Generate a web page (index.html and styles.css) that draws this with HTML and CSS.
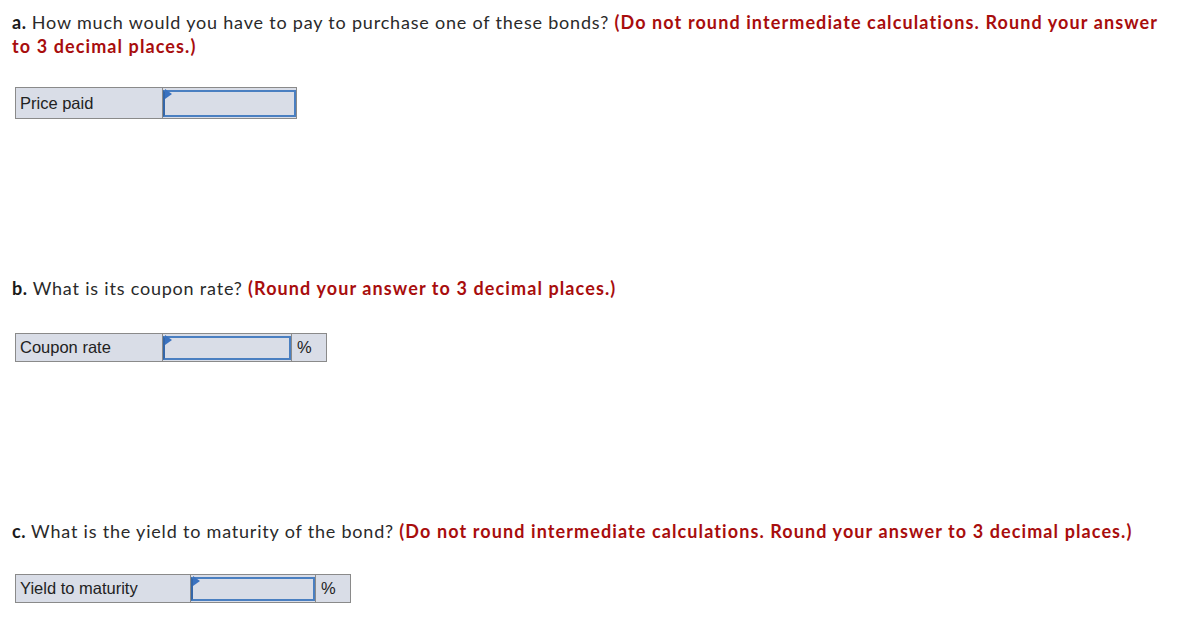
FILE: index.html
```html
<!DOCTYPE html>
<html>
<head>
<meta charset="utf-8">
<link rel="stylesheet" href="styles.css">
</head>
<body>
<div class="page">
  <section class="part part-a">
    <p class="q"><b class="lead">a.</b> How much would you have to pay to purchase one of these bonds? <strong class="note">(Do not round intermediate calculations. Round your answer to 3 decimal places.)</strong></p>
    <table class="ans tall">
      <tr>
        <td class="label w-a">Price paid</td>
        <td class="input-cell in-a"><div class="box"><span class="flag"></span></div></td>
      </tr>
    </table>
  </section>
  <section class="part part-b">
    <p class="q"><b class="lead">b.</b> What is its coupon rate? <strong class="note">(Round your answer to 3 decimal places.)</strong></p>
    <table class="ans">
      <tr>
        <td class="label w-b">Coupon rate</td>
        <td class="input-cell in-b"><div class="box"><span class="flag"></span></div></td>
        <td class="unit">%</td>
      </tr>
    </table>
  </section>
  <section class="part part-c">
    <p class="q"><b class="lead">c.</b> What is the yield to maturity of the bond? <strong class="note">(Do not round intermediate calculations. Round your answer to 3 decimal places.)</strong></p>
    <table class="ans">
      <tr>
        <td class="label w-c">Yield to maturity</td>
        <td class="input-cell in-c"><div class="box"><span class="flag"></span></div></td>
        <td class="unit">%</td>
      </tr>
    </table>
  </section>
</div>
</body>
</html>
```
FILE: styles.css
```css
html, body { margin: 0; padding: 0; background: #fff; }
.page { padding: 10px 12px 0 12px; font-family: Lato, "Open Sans", sans-serif; color: #2a2a2a; }
.q { margin: 0; font-size: 18px; line-height: 24px; letter-spacing: 0.8px; }
.lead { font-weight: 700; color: #1a1a1a; letter-spacing: 0.5px; }
.note { color: #a80d0d; font-weight: 700; letter-spacing: 1.1px; }
.part-a .ans { margin-top: 29px; }
.part-b { margin-top: 157px; }
.part-b .ans { margin-top: 33px; }
.part-c { margin-top: 157px; }
.part-c .ans { margin-top: 31px; }
.ans { border-collapse: collapse; margin-left: 3px; font-family: "Liberation Sans", Arial, sans-serif; font-size: 16.5px; color: #222; }
.ans td { border: 1px solid #8a8a8a; background: #d9dde7; padding: 0; }
.label { padding: 0 4px !important; vertical-align: middle; }
.w-a, .w-b { width: 138px; }
.w-c { width: 166px; }
.in-a { width: 133px; }
.in-b { width: 128px; }
.in-c { width: 124px; }
.input-cell { padding: 2px 0 1px 0 !important; }
.box { position: relative; height: 20px; border: 2px solid #4a7fc1; border-left-color: #3466a8; background: #d9dde7; }
.tall .box { height: 23px; }
.flag { position: absolute; left: 0; top: -3px; width: 0; height: 0; border-top: 5px solid transparent; border-bottom: 5px solid transparent; border-left: 7px solid #3a72c0; }
.unit { width: 24px; padding: 0 5px !important; }
```
